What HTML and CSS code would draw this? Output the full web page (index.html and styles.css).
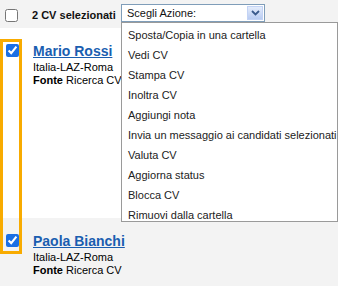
FILE: index.html
```html
<!DOCTYPE html>
<html lang="it">
<head>
<meta charset="utf-8">
<link rel="stylesheet" href="styles.css">
</head>
<body>
<div class="page">
  <div class="toolbar">
    <input type="checkbox" class="cb cb-all">
    <span class="count">2 CV selezionati</span>
    <div class="select">
      <div class="select-box">
        <span class="select-label">Scegli Azione:</span>
        <span class="select-btn">
          <svg width="9" height="6" viewBox="0 0 9 6"><path d="M1 1 L4.5 4.5 L8 1" fill="none" stroke="#3a5a8c" stroke-width="1.8"/></svg>
        </span>
      </div>
      <ul class="menu">
        <li>Sposta/Copia in una cartella</li>
        <li>Vedi CV</li>
        <li>Stampa CV</li>
        <li>Inoltra CV</li>
        <li>Aggiungi nota</li>
        <li>Invia un messaggio ai candidati selezionati</li>
        <li>Valuta CV</li>
        <li>Aggiorna status</li>
        <li>Blocca CV</li>
        <li>Rimuovi dalla cartella</li>
      </ul>
    </div>
  </div>
  <div class="row row-white">
    <div class="cb-col"><input type="checkbox" class="cb" checked></div>
    <div class="info">
      <a href="#" class="name">Mario Rossi</a>
      <div class="meta">Italia-LAZ-Roma</div>
      <div class="meta"><b>Fonte</b> Ricerca CV</div>
    </div>
  </div>
  <div class="row row-gray">
    <div class="cb-col"><input type="checkbox" class="cb" checked></div>
    <div class="info">
      <a href="#" class="name">Paola Bianchi</a>
      <div class="meta">Italia-LAZ-Roma</div>
      <div class="meta"><b>Fonte</b> Ricerca CV</div>
    </div>
  </div>
  <div class="highlight"></div>
</div>
</body>
</html>
```
FILE: styles.css
```css
* { box-sizing: border-box; }
html, body { margin: 0; padding: 0; }
body {
  font-family: "Liberation Sans", Arial, sans-serif;
  color: #111;
  background: #f3f3f3;
}
.page {
  position: relative;
  width: 338px;
  height: 286px;
  overflow: hidden;
}
.toolbar {
  height: 28px;
  background: #f3f3f3;
  display: flex;
  align-items: flex-start;
}
.cb {
  width: 13px;
  height: 13px;
  margin: 0;
  accent-color: #1b6fe4;
  flex-shrink: 0;
}
.cb-all {
  margin: 9px 0 0 5px;
}
.count {
  font-size: 11px;
  font-weight: bold;
  margin: 9px 0 0 14px;
  line-height: 13px;
  width: 89px;
  flex-shrink: 0;
  white-space: nowrap;
}
.select {
  position: relative;
  margin-top: 4px;
  z-index: 2;
}
.select-box {
  width: 144px;
  height: 18px;
  border: 1px solid #7f9db9;
  background: #fff;
  display: flex;
  align-items: center;
  justify-content: space-between;
  padding: 0 1px 0 5px;
}
.select-label {
  font-size: 11px;
  color: #111;
}
.select-btn {
  width: 16px;
  height: 14px;
  background: linear-gradient(#e4ecfb, #b9ccf2);
  border: 1px solid #c3d3f5;
  display: flex;
  align-items: center;
  justify-content: center;
}
.menu {
  position: absolute;
  top: 18px;
  left: 0;
  width: 217px;
  margin: 0;
  padding: 2px 0 0;
  list-style: none;
  background: #fff;
  border: 1px solid #9a9a9a;
  height: 200px;
}
.menu li {
  font-size: 11px;
  line-height: 20px;
  padding-left: 6px;
  color: #222;
  white-space: nowrap;
}
.row {
  display: flex;
  padding-top: 15px;
}
.row-white {
  background: #fff;
  height: 190px;
}
.row-gray {
  background: #f3f3f3;
  height: 68px;
}
.cb-col {
  width: 33px;
  padding: 0 0 0 6px;
  flex-shrink: 0;
}
.info {
  display: flex;
  flex-direction: column;
}
.name {
  font-size: 14px;
  font-weight: bold;
  line-height: 17px;
  color: #1a5eb0;
  text-decoration: underline;
  margin-bottom: 1px;
}
.meta {
  font-size: 11px;
  line-height: 13px;
  color: #000;
}
.highlight {
  position: absolute;
  left: 0;
  top: 39px;
  width: 22px;
  height: 215px;
  border: 3px solid #f8ab00;
}
```
